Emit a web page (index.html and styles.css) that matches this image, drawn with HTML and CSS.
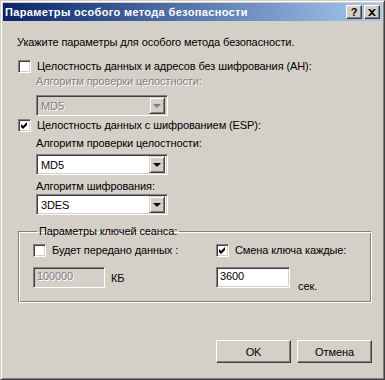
FILE: index.html
```html
<!DOCTYPE html>
<html lang="ru">
<head>
    <meta charset="UTF-8">
    <title>Параметры особого метода безопасности</title>
    <link rel="stylesheet" href="styles.css">
</head>
<body>
    <div class="window">
        <div class="titlebar">
            <span class="title">Параметры особого метода безопасности</span>
            <div class="title-buttons">
                <span class="tbtn">?</span>
                <span class="tbtn close">
                    <svg width="8" height="7" viewBox="0 0 8 7"><path d="M0 0h2l2 2 2-2h2L5 3.5 8 7H6L4 5 2 7H0l3-3.5z" fill="#000"/></svg>
                </span>
            </div>
        </div>
        <div class="content">
            <p class="intro">Укажите параметры для особого метода безопасности.</p>

            <div class="check row-ah">
                <span class="box"></span>
                <span>Целостность данных и адресов без шифрования (AH):</span>
            </div>
            <div class="caption disabled cap-ah">Алгоритм проверки целостности:</div>
            <div class="combo disabled combo-ah">
                <span class="value">MD5</span>
                <span class="drop"><span class="arrow"></span></span>
            </div>

            <div class="check row-esp">
                <span class="box checked">
                    <svg width="7" height="7" viewBox="0 0 7 7"><polygon points="0,2 2,4 6,0 6,3 2,7 0,5" fill="#000"/></svg>
                </span>
                <span>Целостность данных с шифрованием (ESP):</span>
            </div>
            <div class="caption cap-esp">Алгоритм проверки целостности:</div>
            <div class="combo combo-esp">
                <span class="value">MD5</span>
                <span class="drop"><span class="arrow"></span></span>
            </div>
            <div class="caption cap-cipher">Алгоритм шифрования:</div>
            <div class="combo combo-cipher">
                <span class="value">3DES</span>
                <span class="drop"><span class="arrow"></span></span>
            </div>

            <fieldset class="group">
                <legend>Параметры ключей сеанса:</legend>
                <div class="group-grid">
                    <div class="col">
                        <div class="check">
                            <span class="box"></span>
                            <span>Будет передано данных :</span>
                        </div>
                        <div class="field-row">
                            <span class="edit disabled edit-kb">100000</span>
                            <span class="unit">КБ</span>
                        </div>
                    </div>
                    <div class="col">
                        <div class="check">
                            <span class="box checked">
                                <svg width="7" height="7" viewBox="0 0 7 7"><polygon points="0,2 2,4 6,0 6,3 2,7 0,5" fill="#000"/></svg>
                            </span>
                            <span>Смена ключа каждые:</span>
                        </div>
                        <div class="field-row">
                            <span class="edit edit-sec">3600</span>
                            <span class="unit unit-sec">сек.</span>
                        </div>
                    </div>
                </div>
            </fieldset>

            <div class="buttons">
                <span class="button">OK</span>
                <span class="button">Отмена</span>
            </div>
        </div>
    </div>
</body>
</html>
```

FILE: styles.css
```css
body {
    margin: 0;
    padding: 0;
    background-color: #d4d0c8;
    font-family: 'Liberation Sans', Arial, sans-serif;
    font-size: 11px;
    letter-spacing: -0.1px;
    color: #000;
}
.window {
    width: 385px;
    height: 380px;
    box-sizing: border-box;
    background-color: #d4d0c8;
    border: 1px solid;
    border-color: #d4d0c8 #404040 #404040 #d4d0c8;
    box-shadow: inset 1px 1px #fff, inset -1px -1px #808080;
    padding: 2px;
}
.titlebar {
    height: 18px;
    display: flex;
    align-items: center;
    justify-content: space-between;
    background: linear-gradient(to right, #0a246a, #a6caf0);
    padding-left: 2px;
    padding-right: 2px;
}
.title {
    color: #fff;
    font-weight: bold;
    font-size: 11px;
    letter-spacing: 0.35px;
}
.title-buttons {
    display: flex;
    gap: 2px;
}
.tbtn {
    width: 16px;
    height: 14px;
    box-sizing: border-box;
    display: flex;
    align-items: center;
    justify-content: center;
    background-color: #d4d0c8;
    border: 1px solid;
    border-color: #fff #404040 #404040 #fff;
    box-shadow: inset -1px -1px #808080;
    font-weight: bold;
    font-size: 11px;
    line-height: 1;
}

.content {
    padding: 15px 0 0 14px;
}
.intro {
    margin: 0;
    height: 13px;
    line-height: 13px;
}
.check {
    display: flex;
    align-items: center;
    gap: 6px;
    height: 13px;
    line-height: 13px;
    margin-left: 1px;
}
.box {
    width: 13px;
    height: 13px;
    box-sizing: border-box;
    background-color: #fff;
    border: 1px solid;
    border-color: #808080 #fff #fff #808080;
    box-shadow: inset 1px 1px #404040, inset -1px -1px #d4d0c8;
    display: flex;
    align-items: center;
    justify-content: center;
    flex-shrink: 0;
}
.box svg {
    display: block;
}
.row-ah {
    margin-top: 11px;
}
.row-esp {
    margin-top: 3px;
}
.caption {
    margin-left: 19px;
    height: 13px;
    line-height: 13px;
}
.disabled {
    color: #808080;
    text-shadow: 1px 1px 0 #fff;
}
.cap-ah {
    margin-top: 2px;
}
.cap-esp {
    margin-top: 5px;
}
.cap-cipher {
    margin-top: 5px;
}
.combo {
    margin-left: 19px;
    width: 132px;
    height: 21px;
    box-sizing: border-box;
    display: flex;
    align-items: center;
    background-color: #fff;
    border: 1px solid;
    border-color: #808080 #fff #fff #808080;
    box-shadow: inset 1px 1px #404040, inset -1px -1px #d4d0c8;
    padding: 2px;
}
.combo.disabled {
    background-color: #d4d0c8;
}
.combo .value {
    flex: 1;
    padding-left: 2px;
}
.drop {
    width: 16px;
    height: 17px;
    box-sizing: border-box;
    background-color: #d4d0c8;
    border: 1px solid;
    border-color: #d4d0c8 #404040 #404040 #d4d0c8;
    box-shadow: inset 1px 1px #fff, inset -1px -1px #808080;
    display: flex;
    align-items: center;
    justify-content: center;
}
.arrow {
    width: 0;
    height: 0;
    border-left: 4px solid transparent;
    border-right: 4px solid transparent;
    border-top: 4px solid #000;
    margin-top: 1px;
}
.combo.disabled .arrow {
    border-top-color: #808080;
}
.combo-ah {
    margin-top: 7px;
}
.combo-esp {
    margin-top: 4px;
}
.combo-cipher {
    margin-top: 1px;
}

.group {
    margin: 10px 0 0 1px;
    width: 354px;
    height: 78px;
    box-sizing: border-box;
    padding: 0 0 0 14px;
    border: 1px solid;
    border-color: #808080 #fff #fff #808080;
    box-shadow: inset 1px 1px #fff, inset -1px -1px #808080;
}
.group legend {
    padding: 0 2px;
    margin-left: 4px;
    line-height: 13px;
}
.group-grid {
    display: grid;
    grid-template-columns: 183px 1fr;
    margin-top: 6px;
}
.group .check {
    margin-left: 0;
}
.field-row {
    display: flex;
    align-items: center;
    margin-top: 10px;
}
.edit {
    height: 21px;
    box-sizing: border-box;
    background-color: #fff;
    border: 1px solid;
    border-color: #808080 #fff #fff #808080;
    box-shadow: inset 1px 1px #404040, inset -1px -1px #d4d0c8;
    padding: 2px 3px;
    line-height: 13px;
}
.edit.disabled {
    background-color: #d4d0c8;
}
.edit-kb {
    width: 72px;
}
.edit-sec {
    width: 74px;
}
.unit {
    margin-left: 6px;
}
.unit-sec {
    margin-left: 8px;
    align-self: flex-end;
    margin-bottom: -4px;
}

.buttons {
    display: flex;
    gap: 6px;
    margin-top: 37px;
    margin-left: 199px;
}
.button {
    width: 75px;
    height: 23px;
    box-sizing: border-box;
    display: flex;
    align-items: center;
    justify-content: center;
    background-color: #d4d0c8;
    border: 1px solid;
    border-color: #fff #404040 #404040 #fff;
    box-shadow: inset -1px -1px #808080;
}
```
